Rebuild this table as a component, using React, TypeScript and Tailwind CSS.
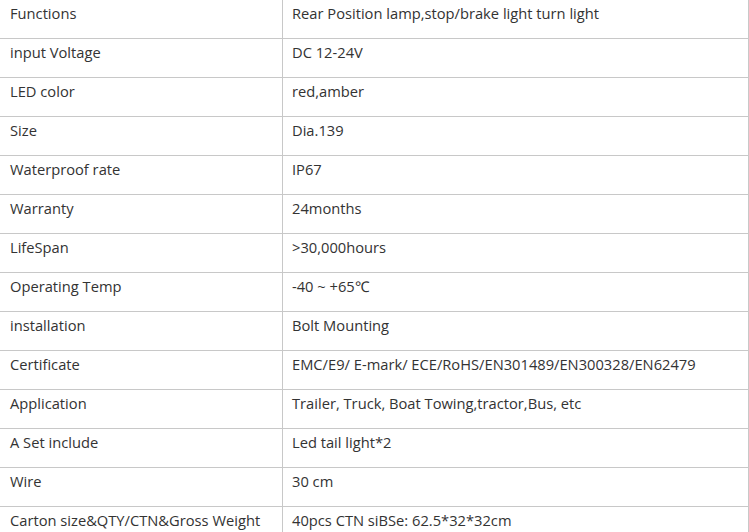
const rows: [string, string][] = [
  ["Functions", "Rear Position lamp,stop/brake light turn light"],
  ["input Voltage", "DC 12-24V"],
  ["LED color", "red,amber"],
  ["Size", "Dia.139"],
  ["Waterproof rate", "IP67"],
  ["Warranty", "24months"],
  ["LifeSpan", ">30,000hours"],
  ["Operating Temp", "-40 ~ +65℃"],
  ["installation", "Bolt Mounting"],
  ["Certificate", "EMC/E9/ E-mark/ ECE/RoHS/EN301489/EN300328/EN62479"],
  ["Application", "Trailer, Truck, Boat Towing,tractor,Bus, etc"],
  ["A Set include", "Led tail light*2"],
  ["Wire", "30 cm"],
  ["Carton size&QTY/CTN&Gross Weight", "40pcs CTN siBSe: 62.5*32*32cm"],
]

export default function App() {
  return (
    <div className="w-[749px] h-[532px] overflow-hidden bg-white font-['Open_Sans',sans-serif] text-[14.7px] text-[#333]">
      <div className="border-r border-[#c8c8c8]">
        {rows.map(([label, value], i) => (
          <div key={i} className="grid grid-cols-[283px_1fr] h-[39px] border-b border-[#c8c8c8]">
            <div className="px-[10px] pt-[2px] leading-[22px] border-r border-[#c8c8c8] whitespace-nowrap">
              {label}
            </div>
            <div className="pl-[9px] pr-[10px] pt-[2px] leading-[22px] whitespace-nowrap">{value}</div>
          </div>
        ))}
      </div>
    </div>
  )
}
